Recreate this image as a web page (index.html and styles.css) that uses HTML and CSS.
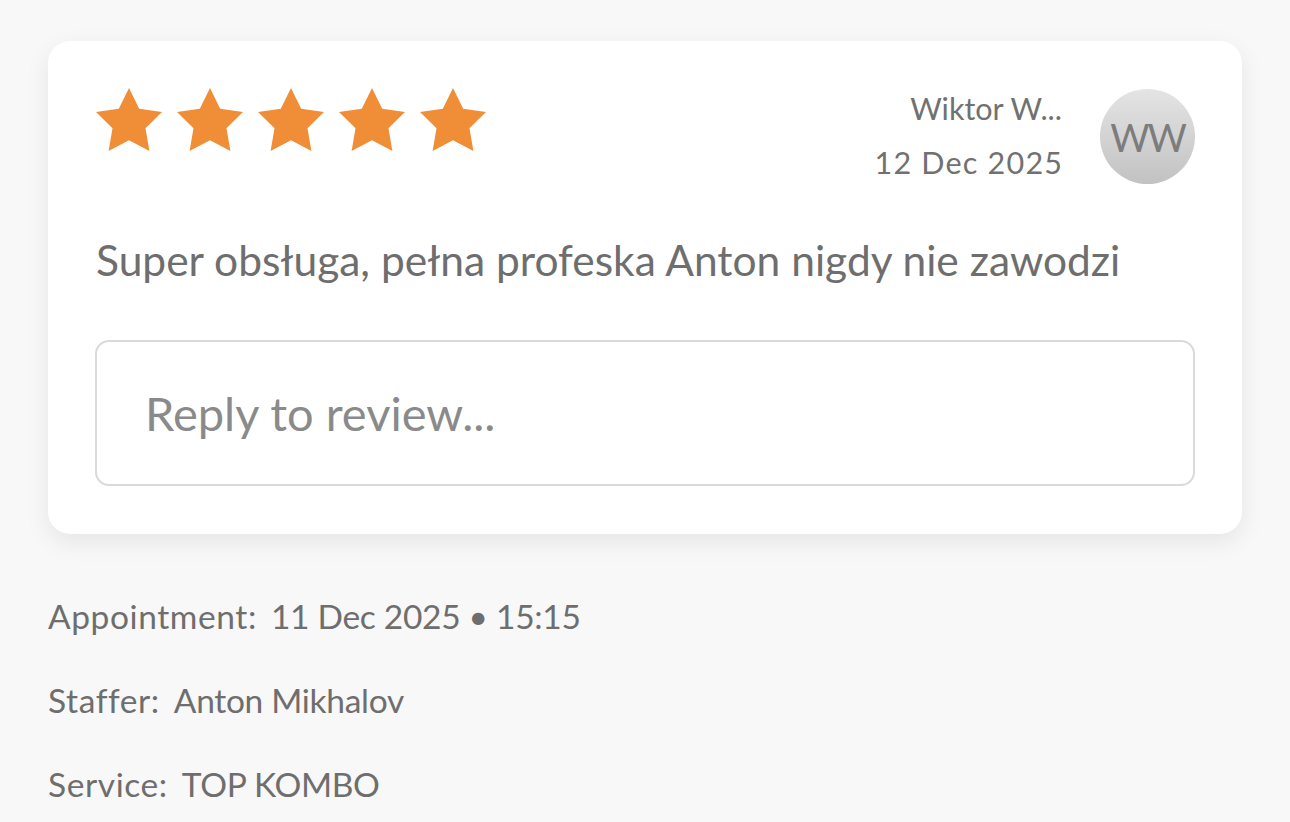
FILE: index.html
```html
<!DOCTYPE html>
<html lang="pl">
<head>
<meta charset="utf-8">
<title>Review</title>
<link rel="stylesheet" href="styles.css">
</head>
<body>
<main class="page">
  <section class="card">
    <div class="card-head">
      <div class="stars">
        <svg class="star" viewBox="2 2 20 19.02"><path d="M12 2l3.09 6.26L22 9.27l-5 4.87 1.18 6.88L12 17.77l-6.18 3.25L7 14.14 2 9.27l6.91-1.01L12 2z"/></svg>
        <svg class="star" viewBox="2 2 20 19.02"><path d="M12 2l3.09 6.26L22 9.27l-5 4.87 1.18 6.88L12 17.77l-6.18 3.25L7 14.14 2 9.27l6.91-1.01L12 2z"/></svg>
        <svg class="star" viewBox="2 2 20 19.02"><path d="M12 2l3.09 6.26L22 9.27l-5 4.87 1.18 6.88L12 17.77l-6.18 3.25L7 14.14 2 9.27l6.91-1.01L12 2z"/></svg>
        <svg class="star" viewBox="2 2 20 19.02"><path d="M12 2l3.09 6.26L22 9.27l-5 4.87 1.18 6.88L12 17.77l-6.18 3.25L7 14.14 2 9.27l6.91-1.01L12 2z"/></svg>
        <svg class="star" viewBox="2 2 20 19.02"><path d="M12 2l3.09 6.26L22 9.27l-5 4.87 1.18 6.88L12 17.77l-6.18 3.25L7 14.14 2 9.27l6.91-1.01L12 2z"/></svg>
      </div>
      <div class="author">
        <div class="author-meta">
          <div class="author-name">Wiktor W...</div>
          <div class="author-date">12 Dec 2025</div>
        </div>
        <div class="avatar">WW</div>
      </div>
    </div>
    <p class="review-text">Super obsługa, pełna profeska Anton nigdy nie zawodzi</p>
    <div class="reply-box">Reply to review...</div>
  </section>
  <section class="details">
    <div class="detail-row"><span class="detail-label">Appointment:</span><span class="detail-value">11 Dec 2025 • 15:15</span></div>
    <div class="detail-row"><span class="detail-label">Staffer:</span><span class="detail-value">Anton Mikhalov</span></div>
    <div class="detail-row"><span class="detail-label">Service:</span><span class="detail-value">TOP KOMBO</span></div>
  </section>
</main>
</body>
</html>
```
FILE: styles.css
```css
html, body {
  margin: 0;
  padding: 0;
  background: #f8f8f8;
}
body {
  font-family: "Lato", "Liberation Sans", sans-serif;
  color: #6e6e6e;
}
.page {
  padding: 41px 48px 0 48px;
}
.card {
  background: #ffffff;
  border-radius: 22px;
  box-shadow: 0 8px 24px rgba(0, 0, 0, 0.08);
  padding: 47px 47px 48px 47px;
}
.card-head {
  display: flex;
  justify-content: space-between;
  align-items: flex-start;
}
.stars {
  display: flex;
  gap: 15px;
  padding-left: 1px;
}
.star {
  width: 66px;
  height: 63px;
  fill: #f08e38;
  display: block;
}
.author {
  display: flex;
  align-items: flex-start;
  gap: 38px;
}
.author-meta {
  text-align: right;
  padding-top: 2px;
  color: #717171;
}
.author-name {
  font-size: 30.5px;
  line-height: 36px;
}
.author-date {
  font-size: 30.5px;
  line-height: 36px;
  margin-top: 18px;
  letter-spacing: 1.2px;
  margin-right: -1.2px;
}
.avatar {
  width: 95px;
  height: 95px;
  margin-top: 1px;
  border-radius: 50%;
  background: linear-gradient(180deg, #e4e4e4 0%, #c2c2c2 100%);
  color: #7c7c7c;
  font-size: 38px;
  display: flex;
  align-items: center;
  justify-content: center;
  letter-spacing: -2px;
}
.review-text {
  margin: 50px 0 0 1px;
  font-size: 42.5px;
  line-height: 52px;
  color: #6e6e6e;
}
.reply-box {
  margin-top: 54px;
  height: 146px;
  border: 2px solid #dadada;
  border-radius: 14px;
  box-sizing: border-box;
  display: flex;
  align-items: center;
  padding-left: 48px;
  font-size: 47px;
  color: #8a8a8a;
}
.details {
  padding-top: 62px;
}
.detail-row {
  font-size: 33.5px;
  line-height: 40px;
  margin-bottom: 44px;
  color: #6e6e6e;
}
.detail-label {
  margin-right: 14px;
  letter-spacing: 0.6px;
}
.detail-value {
  letter-spacing: -0.3px;
}
```
